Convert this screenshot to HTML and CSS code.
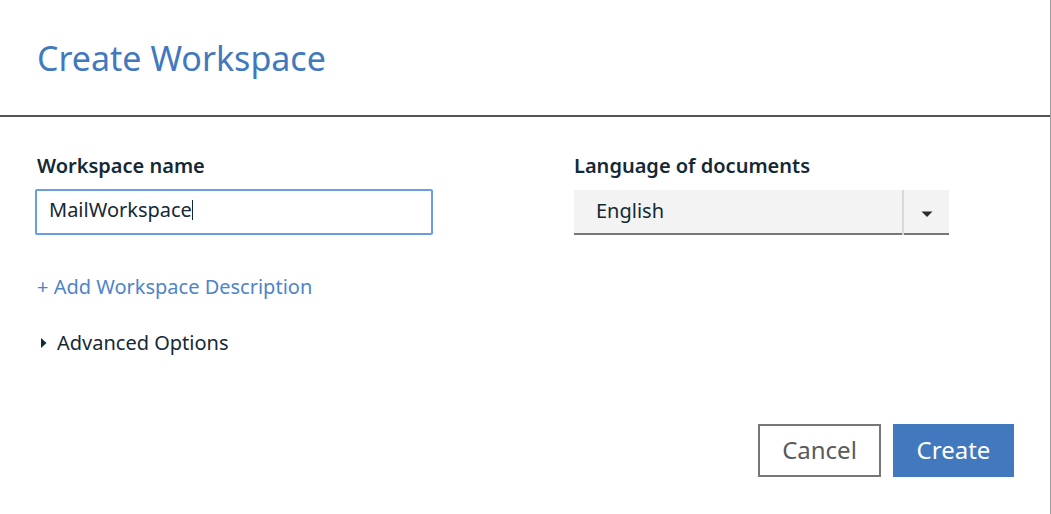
FILE: index.html
```html
<!DOCTYPE html>
<html lang="en">
<head>
<meta charset="utf-8">
<title>Create Workspace</title>
<link rel="stylesheet" href="styles.css">
</head>
<body>
<div class="dialog">
  <header class="header">
    <h1 class="title">Create Workspace</h1>
  </header>
  <main class="body">
    <div class="fields">
      <div class="field">
        <label class="label">Workspace name</label>
        <div class="input"><span class="input-text">MailWorkspace</span><span class="caret"></span></div>
      </div>
      <div class="field">
        <label class="label">Language of documents</label>
        <div class="select">
          <span class="select-text">English</span>
          <span class="select-arrow">
            <svg width="12" height="6" viewBox="0 0 12 6"><path d="M0.5 0.5 H11.5 L6 6 Z" fill="#2d2d2d"/></svg>
          </span>
        </div>
      </div>
    </div>
    <div class="link">+ Add Workspace Description</div>
    <div class="advanced">
      <svg class="tri" width="6" height="10" viewBox="0 0 6 10"><path d="M0 0 L5.5 5 L0 10 Z" fill="#152935"/></svg>
      <span>Advanced Options</span>
    </div>
    <div class="actions">
      <button class="btn btn-secondary">Cancel</button>
      <button class="btn btn-primary">Create</button>
    </div>
  </main>
</div>
</body>
</html>
```

FILE: styles.css
```css
html, body {
  margin: 0;
  padding: 0;
  background: #ffffff;
}

body {
  font-family: "Noto Sans", "Open Sans", sans-serif;
  color: #152935;
}

.dialog {
  width: 1050px;
  height: 514px;
  border-right: 1px solid #9a9a9a;
  box-sizing: content-box;
  overflow: hidden;
}

.header {
  height: 117px;
  box-sizing: border-box;
  border-bottom: 2px solid #555555;
  padding: 38px 0 0 37px;
}

.title {
  margin: 0;
  font-size: 34px;
  line-height: 40px;
  font-weight: 400;
  color: #4178be;
}

.body {
  padding: 36px 36px 0 37px;
}

.fields {
  display: grid;
  grid-template-columns: 537px 375px;
}

.field {
  display: flex;
  flex-direction: column;
  align-items: flex-start;
}

.label {
  padding-top: 1px;
  font-size: 20px;
  line-height: 24px;
  font-weight: 600;
  color: #152935;
}

.input {
  margin-top: 11px;
  margin-left: -2px;
  width: 398px;
  height: 46px;
  box-sizing: border-box;
  border: 2px solid #6b9ce8;
  border-radius: 2px;
  padding: 7px 0 0 12px;
  font-size: 20px;
  line-height: 24px;
  display: flex;
  align-items: flex-start;
}

.caret {
  display: inline-block;
  width: 1px;
  height: 20px;
  margin-top: 2px;
  background: #152935;
}

.select {
  margin-top: 12px;
  width: 375px;
  height: 45px;
  box-sizing: border-box;
  background: #f3f3f3;
  border-bottom: 2px solid #777777;
  display: flex;
  font-size: 20px;
  line-height: 24px;
}

.select-text {
  flex: 1;
  padding: 9px 0 0 22px;
}

.select-arrow {
  width: 45px;
  margin-bottom: -2px;
  border-left: 2px solid #d8d8d8;
  display: flex;
  align-items: center;
  justify-content: center;
  padding-top: 2px;
}

.link {
  margin-top: 40px;
  font-size: 20px;
  line-height: 24px;
  color: #4f84c9;
}

.advanced {
  margin-top: 32px;
  display: flex;
  align-items: center;
  font-size: 20px;
  line-height: 24px;
  color: #152935;
}

.tri {
  margin-left: 4px;
  margin-right: 10px;
}

.actions {
  margin-top: 69px;
  display: flex;
  justify-content: flex-end;
  gap: 12px;
}

.btn {
  height: 53px;
  box-sizing: border-box;
  border: 2px solid;
  border-radius: 0;
  font-family: "Noto Sans", "Open Sans", sans-serif;
  font-size: 24px;
  line-height: 45px;
  padding: 0 0 2px 0;
  cursor: pointer;
}

.btn-secondary {
  width: 123px;
  background: #ffffff;
  border-color: #777777;
  color: #5a5a5a;
}

.btn-primary {
  width: 121px;
  background: #4178be;
  border-color: #4178be;
  color: #ffffff;
}
```
